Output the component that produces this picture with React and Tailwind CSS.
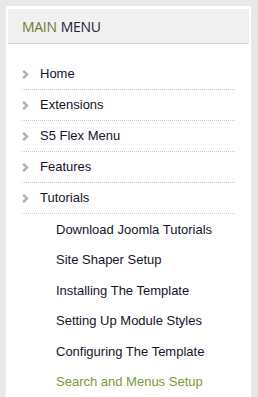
import React from "react";

const main = ["Home", "Extensions", "S5 Flex Menu", "Features", "Tutorials"];
const sub = [
  "Download Joomla Tutorials",
  "Site Shaper Setup",
  "Installing The Template",
  "Setting Up Module Styles",
  "Configuring The Template",
];

function Chevron() {
  return (
    <svg width="7" height="9" viewBox="0 0 7 9" className="shrink-0">
      <path d="M1.2 0.8 L5 4.5 L1.2 8.2" fill="none" stroke="#b0b0b0" strokeWidth="2.4" />
    </svg>
  );
}

export default function App() {
  return (
    <div className="w-[258px] h-[397px] overflow-hidden bg-[#e9e8e8] pt-[6px] pl-[6px] pr-[7px]">
      <div className="bg-white h-full px-[2px] pt-[3px]">
        <div className="h-[35px] bg-[#f0f0f0] border-b border-[#d6d6d6] flex items-center pl-[14px] pt-[1px] font-['Open_Sans',sans-serif] text-[14px] tracking-[-0.3px]">
          <span className="text-[#6b7b32]">MAIN</span>
          <span className="text-[#22223a] ml-[4px]">MENU</span>
        </div>
        <ul className="mx-[14px] mt-[15px] font-['Liberation_Sans',Arial,sans-serif] text-[13px]">
          {main.map((m) => (
            <li key={m} className="h-[31px] flex items-center border-b border-dotted border-[#c8c8c8]">
              <Chevron />
              <span className="ml-[11px] text-[#15132a]">{m}</span>
            </li>
          ))}
          {sub.map((s) => (
            <li key={s} className="h-[30.5px] flex items-center pl-[34px] text-[#15132a]">
              {s}
            </li>
          ))}
          <li className="h-[30.5px] flex items-center pl-[34px] text-[#7a9a35]">Search and Menus Setup</li>
        </ul>
      </div>
    </div>
  );
}
